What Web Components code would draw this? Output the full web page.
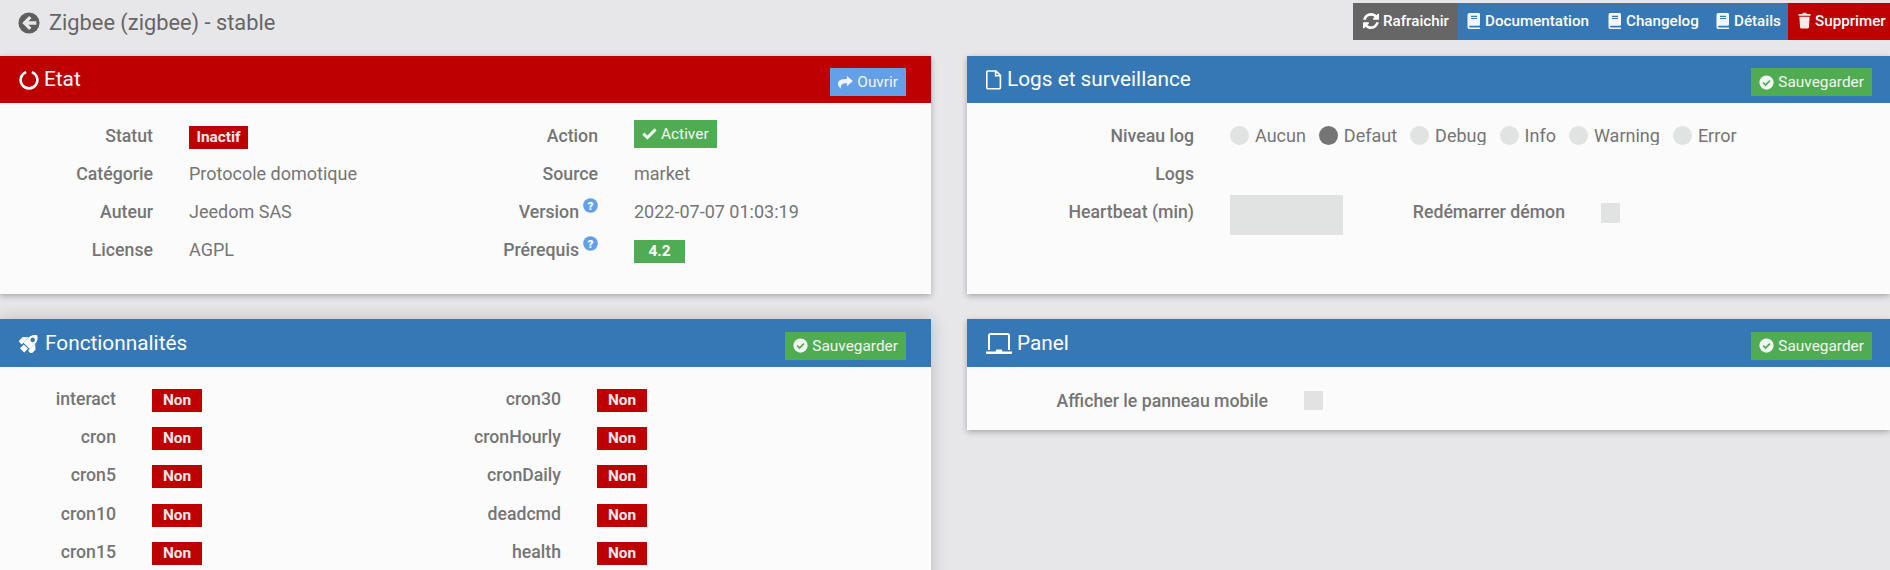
<!DOCTYPE html>
<html lang="fr"><head><meta charset="utf-8">
<style>
html,body{margin:0;padding:0;height:570px;overflow:hidden;background:#e7e7e9;font-family:Roboto,"Liberation Sans",sans-serif;color:#757575}
page-root{display:block}
</style></head><body>
<script>
const I={
back:'<svg viewBox="0 0 24 24" width="22" height="22"><circle cx="12" cy="12" r="11.5" fill="#5e5e5e"/><path d="M20 10.2h-8.6l3.3-3.3-2.5-2.5L4.600 12l7.600 7.600 2.500-2.500-3.300-3.300H20z" fill="#e7e7e9"/></svg>',
ring:'<svg viewBox="0 0 20 20" width="20" height="20"><path d="M7.130 2.100A8.400 8.400 0 1 0 12.870 2.100" fill="none" stroke="#fff" stroke-width="2.600"/></svg>',
file:'<svg viewBox="0 0 16 20" width="16" height="20"><path d="M1.800 1h8.200l4.400 4.400v12.200a1.200 1.200 0 0 1-1.200 1.200H1.800a1 1 0 0 1-1-1V2a1 1 0 0 1 1-1zM9.600 1.400v4.400h4.600" fill="none" stroke="#fff" stroke-width="1.600"/></svg>',
rocket:'<svg viewBox="0 0 21 20" width="21" height="20"><g transform="rotate(45 10.500 10)"><path fill="#fff" d="M10.500-1C13.700 1 15 3.500 15 7v7H6V7C6 3.500 7.300 1 10.500-1z"/><path fill="#fff" d="M6 6.500 1.500 10.500v6H6zM15 6.500l4.500 4v6H15zM7.500 15h6v5.500h-6z"/><circle cx="10.500" cy="5.500" r="2.300" fill="#3578b5"/></g></svg>',
laptop:'<svg viewBox="0 0 26 21" width="26" height="21"><path fill="none" stroke="#fff" stroke-width="2" d="M3 17V2.400A1.400 1.400 0 0 1 4.400 1h17.200A1.400 1.400 0 0 1 23 2.400V17"/><path fill="#fff" d="M0 18.500h9.500l.8-2h5.400l.8 2H26V20a1 1 0 0 1-1 1H1a1 1 0 0 1-1-1z"/></svg>',
refresh:'<svg viewBox="0 0 1536 1536" width="16" height="16"><path fill="#fff" d="M1511 928q0 5-1 7-64 268-268 434.500T764 1536q-146 0-282.500-55T238 1324l-129 129q-19 19-45 19t-45-19-19-45V960q0-26 19-45t45-19h448q26 0 45 19t19 45-19 45l-137 137q71 66 161 102t187 36q134 0 250-65t186-179q11-17 53-117 8-23 30-23h192q13 0 22.500 9.500t9.500 22.500zm25-800v448q0 26-19 45t-45 19h-448q-26 0-45-19t-19-45 19-45l138-138Q969 256 768 256q-134 0-250 65T332 500q-11 17-53 117-8 23-30 23H50q-13 0-22.500-9.500T18 608v-7q65-268 270-434.500T768 0q146 0 284 55.500T1297 212l130-129q19-19 45-19t45 19 19 45z"/></svg>',
book:'<svg viewBox="0 0 14 16" width="14" height="16"><path fill="#f3f6fb" fill-rule="evenodd" d="M2.400 0h9.200A1.400 1.400 0 0 1 13 1.400V11.500a1.300 1.300 0 0 1-1.300 1.300H2.700a.9.9 0 0 0 0 1.700H13V16H2.200A1.900 1.900 0 0 1 .5 14V1.900A1.900 1.900 0 0 1 2.400 0zM4 2.800v1.200h6V2.800zM4 5v1h6V5z"/></svg>',
trash:'<svg viewBox="0 0 14 17" width="13" height="17"><path fill="#fbe9e9" d="M4.600 1.500 5.300.2h3.400l.7 1.300H13.500V3.500H.5V1.500zM1.500 4.500h11l-.7 11.300a1.200 1.200 0 0 1-1.200 1.200H3.400a1.200 1.200 0 0 1-1.200-1.200z"/></svg>',
share:'<svg viewBox="0 0 16 14" width="15" height="13"><path fill="#f0f4fa" d="M9.500 0 16 5.500 9.500 11V7.700C5.500 7.600 2.600 8.700 2.900 13.700.6 11.500 0 9.600 0 8 0 4.300 3.600 3.200 9.500 3.200z"/></svg>',
check:'<svg viewBox="0 0 16 13" width="15" height="12"><path fill="#f2f8f2" d="M5.700 12.800.2 7.300l2.300-2.300 3.200 3.200L13.500.300l2.300 2.300z"/></svg>',
ccheck:'<svg viewBox="0 0 16 16" width="15" height="15"><circle cx="8" cy="8" r="7.600" fill="#f2f6f2"/><path d="M4.400 8.200l2.600 2.500 4.600-4.700" fill="none" stroke="#50ac53" stroke-width="1.900"/></svg>',
help:'<svg viewBox="0 0 16 16" width="15" height="15"><circle cx="8" cy="8" r="7.800" fill="#63a0e8"/><text x="8" y="12.500" text-anchor="middle" font-family="Roboto" font-weight="900" font-size="12.500" fill="#fff">?</text></svg>'
};
function def(name,css,html){customElements.define(name,class extends HTMLElement{
 connectedCallback(){if(this.shadowRoot)return;const r=this.attachShadow({mode:'open'});r.innerHTML='<style>'+css+'</style>'+html(this);}
});}
def('jd-btn',`:host{display:inline-flex;align-items:center;height:37px;box-sizing:border-box;color:#fff;font-size:15.200px;font-weight:500;white-space:nowrap;gap:4px;padding:0 0 2px 10px}
 svg{display:block;flex:none}`,
 h=>`${I[h.getAttribute('icon')]}<slot></slot>`);
def('jd-hbtn',`:host{display:inline-flex;align-items:center;height:28px;padding:0 8px;box-sizing:border-box;color:#f2f6f2;font-size:15.400px;white-space:nowrap;background:var(--b);gap:4px}
 :host([slot=action]){margin-top:5px}
 svg{display:block;flex:none}`,
 h=>`${I[h.getAttribute('icon')]}<slot></slot>`);
def('jd-badge',`:host{display:inline-block;height:23px;line-height:23px;background:#bd0000;color:#f5e8ec;font-size:15.400px;font-weight:700;text-align:center;box-sizing:border-box;white-space:nowrap}`,h=>'<slot></slot>');
def('jd-panel',`:host{display:block;background:#fbfbfb;box-shadow:var(--sh,0 2px 6px rgba(0,0,0,.28))}
 header{display:flex;align-items:center;height:var(--hh,47px);padding:0 var(--pr,25px) 0 19px;background:var(--head,#3578b5);color:#fff;font-size:20.800px;font-weight:400;gap:5px}
 span{flex:1;line-height:1}
 svg{display:block;flex:none}
 section{box-sizing:border-box;height:var(--bh)}`,
 h=>`<header>${I[h.getAttribute('icon')]}<span>${h.getAttribute('title')}</span><slot name="action"></slot></header><section><slot></slot></section>`);
def('jd-row',`:host{display:grid;grid-template-columns:var(--lw) auto;column-gap:var(--cg,36px);height:var(--rh,38px);align-items:start;font-size:18px}
 label{display:flex;justify-content:flex-end;font-size:17.700px;font-weight:500;color:#757575;line-height:21px;position:relative;white-space:nowrap}
 label.h{padding-right:19px}
 label.h svg{position:absolute;right:0;top:-4px}
 div{display:flex;align-items:flex-start;white-space:nowrap;line-height:19px;max-width:var(--vw,none);overflow:var(--vo,visible)}`,
 h=>`<label class="${h.hasAttribute('help')?'h':''}">${h.getAttribute('label')}${h.hasAttribute('help')?I.help:''}</label><div><slot></slot></div>`);
def('jd-radio',`:host{display:inline-flex;align-items:center;gap:6px;margin-right:13px;font-size:18px;line-height:19px;color:#757575}
 i{display:block;width:19px;height:19px;border-radius:50%;background:#e1e3e2;flex:none}
 :host([on]) i{background:#757575}`,h=>'<i></i><slot></slot>');
def('jd-check',`:host{display:block;width:19px;height:20px;background:#e1e3e2;margin-top:1px}`,h=>'');
def('jd-input',`:host{display:block;width:113px;height:40px;background:#e1e3e2;margin-top:-7px}`,h=>'');
def('page-root',`:host{display:block;width:1890px;height:570px;overflow:hidden;position:relative}
 .top{display:flex;align-items:flex-start;height:56px}
 .title{display:flex;align-items:center;gap:9px;padding:12px 0 0 18px;font-size:21.800px;color:#666;flex:1;line-height:22px}
 .title svg{display:block}
 .acts{display:flex;padding-top:3px}
 .grid{display:grid;grid-template-columns:931px 923px;column-gap:36px;grid-template-rows:238px auto;row-gap:25px;width:1890px}
 .two{display:grid;grid-template-columns:445px 1fr;padding-top:23px}
 .feat{display:grid;grid-template-columns:445px 1fr;padding-top:22px;--rh:38.200px}
 jd-badge.w{width:50px}
 .rl{width:222px;margin-right:36px;text-align:right;font-size:17.700px;font-weight:500;color:#757575;line-height:21px}
`,h=>`
 <div class="top">
  <div class="title">${I.back}<span>Zigbee (zigbee) - stable</span></div>
  <div class="acts">
   <jd-btn icon="refresh" style="background:#666;width:105px;">Rafraichir</jd-btn>
   <jd-btn icon="book" style="background:#3578b5;width:141px;padding-left:9px">Documentation</jd-btn>
   <jd-btn icon="book" style="background:#3578b5;width:108px;padding-left:9px">Changelog</jd-btn>
   <jd-btn icon="book" style="background:#3578b5;width:81px;padding-left:9px">Détails</jd-btn>
   <jd-btn icon="trash" style="background:#bd0000;width:102px">Supprimer</jd-btn>
  </div>
 </div>
 <div class="grid">
  <jd-panel icon="ring" title="Etat" style="--head:#bd0000;--bh:191px">
   <jd-hbtn slot="action" icon="share" style="--b:#63a0e8">Ouvrir</jd-hbtn>
   <div class="two">
    <div style="--lw:153px">
     <jd-row label="Statut"><jd-badge style="width:59px">Inactif</jd-badge></jd-row>
     <jd-row label="Catégorie"><span>Protocole domotique</span></jd-row>
     <jd-row label="Auteur"><span>Jeedom SAS</span></jd-row>
     <jd-row label="License"><span>AGPL</span></jd-row>
    </div>
    <div style="--lw:153px">
     <jd-row label="Action"><jd-hbtn icon="check" style="--b:#50ac53;margin-top:-6px">Activer</jd-hbtn></jd-row>
     <jd-row label="Source"><span>market</span></jd-row>
     <jd-row label="Version" help><span>2022-07-07 01:03:19</span></jd-row>
     <jd-row label="Prérequis" help><jd-badge style="width:51px;background:#50ac53;color:#fff">4.2</jd-badge></jd-row>
    </div>
   </div>
  </jd-panel>
  <jd-panel icon="file" title="Logs et surveillance" style="--bh:191px;--pr:18px">
   <jd-hbtn slot="action" icon="ccheck" style="--b:#50ac53">Sauvegarder</jd-hbtn>
   <div style="padding-top:23px;--lw:227px">
    <jd-row label="Niveau log" style="--vw:507px;--vo:hidden"><jd-radio>Aucun</jd-radio><jd-radio on>Defaut</jd-radio><jd-radio>Debug</jd-radio><jd-radio>Info</jd-radio><jd-radio>Warning</jd-radio><jd-radio>Error</jd-radio></jd-row>
    <jd-row label="Logs"></jd-row>
    <jd-row label="Heartbeat (min)"><jd-input></jd-input><div class="rl">Redémarrer démon</div><jd-check></jd-check></jd-row>
   </div>
  </jd-panel>
  <jd-panel icon="rocket" title="Fonctionnalités" style="--bh:400px;--hh:48px;--sh:0 0 16px rgba(0,0,0,.2)">
   <jd-hbtn slot="action" icon="ccheck" style="--b:#50ac53">Sauvegarder</jd-hbtn>
   <div class="feat">
    <div style="--lw:116px">
     <jd-row label="interact"><jd-badge class="w">Non</jd-badge></jd-row>
     <jd-row label="cron"><jd-badge class="w">Non</jd-badge></jd-row>
     <jd-row label="cron5"><jd-badge class="w">Non</jd-badge></jd-row>
     <jd-row label="cron10"><jd-badge class="w">Non</jd-badge></jd-row>
     <jd-row label="cron15"><jd-badge class="w">Non</jd-badge></jd-row>
    </div>
    <div style="--lw:116px">
     <jd-row label="cron30"><jd-badge class="w">Non</jd-badge></jd-row>
     <jd-row label="cronHourly"><jd-badge class="w">Non</jd-badge></jd-row>
     <jd-row label="cronDaily"><jd-badge class="w">Non</jd-badge></jd-row>
     <jd-row label="deadcmd"><jd-badge class="w">Non</jd-badge></jd-row>
     <jd-row label="health"><jd-badge class="w">Non</jd-badge></jd-row>
    </div>
   </div>
  </jd-panel>
  <jd-panel icon="laptop" title="Panel" style="--bh:63px;--hh:48px;--pr:18px;align-self:start">
   <jd-hbtn slot="action" icon="ccheck" style="--b:#50ac53">Sauvegarder</jd-hbtn>
   <div style="padding-top:24px;--lw:301px">
    <jd-row label="Afficher le panneau mobile"><jd-check style="margin-top:0;height:19px"></jd-check></jd-row>
   </div>
  </jd-panel>
 </div>`);
document.body.appendChild(document.createElement('page-root'));
</script>
</body></html>
